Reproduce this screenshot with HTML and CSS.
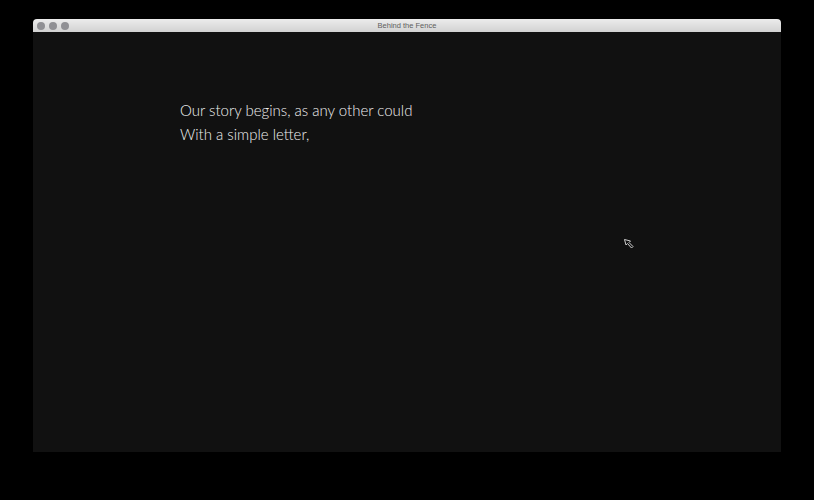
FILE: index.html
```html
<!DOCTYPE html>
<html>
<head>
<meta charset="utf-8">
<title>Behind the Fence</title>
<link rel="stylesheet" href="styles.css">
</head>
<body>
<div class="window">
  <div class="titlebar">
    <div class="lights">
      <span class="light"></span>
      <span class="light"></span>
      <span class="light"></span>
    </div>
    <div class="title">Behind the Fence</div>
  </div>
  <div class="content">
    <div class="story">
      <p>Our story begins, as any other could</p>
      <p>With a simple letter,</p>
    </div>
    <svg class="pointer" width="12" height="12" viewBox="0 0 12 12">
      <path d="M1.5 1.5 L3 7 L4.5 5.5 L8.5 10 L10 8.5 L6 4.5 L7.5 3 Z" fill="none" stroke="#cfcfcf" stroke-width="1"/>
    </svg>
  </div>
</div>
</body>
</html>
```
FILE: styles.css
```css
html, body {
  margin: 0;
  padding: 0;
  background: #000;
  width: 814px;
  height: 500px;
  overflow: hidden;
}

.window {
  margin: 19px 0 0 33px;
  width: 748px;
  display: flex;
  flex-direction: column;
}

.titlebar {
  height: 13px;
  background: linear-gradient(#ececec, #d2d2d2);
  border-radius: 4px 4px 0 0;
  display: flex;
  align-items: center;
  position: relative;
}

.lights {
  display: flex;
  gap: 4px;
  padding-left: 4px;
}

.light {
  width: 8px;
  height: 8px;
  border-radius: 50%;
  background: #909094;
}

.title {
  position: absolute;
  left: 0;
  right: 0;
  top: 0;
  text-align: center;
  font-family: "Liberation Sans", Arial, sans-serif;
  font-size: 7.5px;
  line-height: 13px;
  color: #5e5e5e;
}

.content {
  height: 420px;
  background: #111111;
  position: relative;
  padding: 66px 0 0 147px;
  box-sizing: border-box;
}

.story p {
  margin: 0;
  font-family: "Lato", "Noto Sans", sans-serif;
  font-weight: 300;
  font-size: 15px;
  line-height: 24px;
  color: #f0f0f0;
}

.pointer {
  position: absolute;
  left: 590px;
  top: 206px;
}
```
